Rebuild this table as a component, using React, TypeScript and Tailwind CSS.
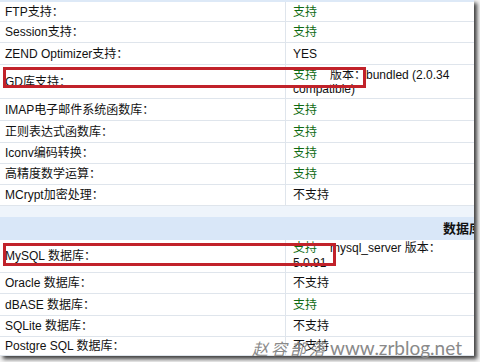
import React from "react";

const G = ({ children }: { children: React.ReactNode }) => (
  <span className="text-[#0f6a12]">{children}</span>
);

type Row = { l: string; r: React.ReactNode; h: string };

const top: Row[] = [
  { l: "FTP支持：", r: <G>支持</G>, h: "h-[20px]" },
  { l: "Session支持：", r: <G>支持</G>, h: "h-[21px]" },
  { l: "ZEND Optimizer支持：", r: <span>YES</span>, h: "h-[22px]" },
  {
    l: "GD库支持：",
    r: (
      <div className="leading-[14px]">
        <div className="flex">
          <G>支持</G>
          <span className="ml-[13px]">版本：bundled (2.0.34</span>
        </div>
        <div>compatible)</div>
      </div>
    ),
    h: "h-[34px]",
  },
  { l: "IMAP电子邮件系统函数库：", r: <G>支持</G>, h: "h-[22px]" },
  { l: "正则表达式函数库：", r: <G>支持</G>, h: "h-[22px]" },
  { l: "Iconv编码转换：", r: <G>支持</G>, h: "h-[21px]" },
  { l: "高精度数学运算：", r: <G>支持</G>, h: "h-[21px]" },
  { l: "MCrypt加密处理：", r: <span>不支持</span>, h: "h-[21px]" },
];

const bottom: Row[] = [
  {
    l: "MySQL 数据库：",
    r: (
      <div className="leading-[15px]">
        <div className="flex">
          <G>支持</G>
          <span className="ml-[13px]">mysql_server 版本：</span>
        </div>
        <div>5.0.91</div>
      </div>
    ),
    h: "h-[33px]",
  },
  { l: "Oracle 数据库：", r: <span>不支持</span>, h: "h-[21px]" },
  { l: "dBASE 数据库：", r: <G>支持</G>, h: "h-[22px]" },
  { l: "SQLite 数据库：", r: <span>不支持</span>, h: "h-[21px]" },
  { l: "Postgre SQL 数据库：", r: <span>不支持</span>, h: "h-[19px]" },
];

function TRow({ row }: { row: Row }) {
  return (
    <div className={`flex border-b border-[#dfe5ec] ${row.h}`}>
      <div className="w-[286px] shrink-0 border-r border-[#dfe5ec] pl-[5px] flex items-center whitespace-nowrap">
        {row.l}
      </div>
      <div className="flex-1 pl-[7px] flex items-center whitespace-nowrap">{row.r}</div>
    </div>
  );
}

export default function App() {
  return (
    <div
      className="relative w-[480px] h-[362px] bg-[#f4f4f4] overflow-hidden text-[12px] text-[#111]"
      style={{ fontFamily: '"Liberation Sans", "Noto Sans CJK SC", sans-serif' }}
    >
      <div className="w-[474px] h-[356px] bg-white overflow-hidden shadow-[3px_3px_4px_rgba(0,0,0,0.75)]">
        <div className="h-[2px] bg-[#dde9f7]" />
        {top.map((r, i) => (
          <TRow key={i} row={r} />
        ))}
        <div className="h-[11px] bg-[#eef4fb]" />
        <div className="h-[23px] bg-[#d9e7f8] flex items-center pl-[443px] whitespace-nowrap font-bold text-[13px]">
          数据库支持
        </div>
        {bottom.map((r, i) => (
          <TRow key={i} row={r} />
        ))}
      </div>

      {/* red highlight boxes */}
      <div className="absolute left-[3px] top-[67px] w-[363px] h-[21px] border-[3px] border-[#c1222a]" />
      <div className="absolute left-[3px] top-[243px] w-[333px] h-[23px] border-[3px] border-[#c1222a]" />

      {/* watermark */}
      <div className="absolute left-[252px] top-[334px] flex items-baseline whitespace-nowrap text-[#8a8a8a]">
        <span
          className="italic text-[16px] tracking-[3px] mr-[2px]"
          style={{ fontFamily: '"Noto Sans CJK SC", sans-serif' }}
        >
          赵容部落
        </span>
        <span className="text-[19px]" style={{ fontFamily: '"Lato", sans-serif' }}>
          www.zrblog.net
        </span>
      </div>
    </div>
  );
}
